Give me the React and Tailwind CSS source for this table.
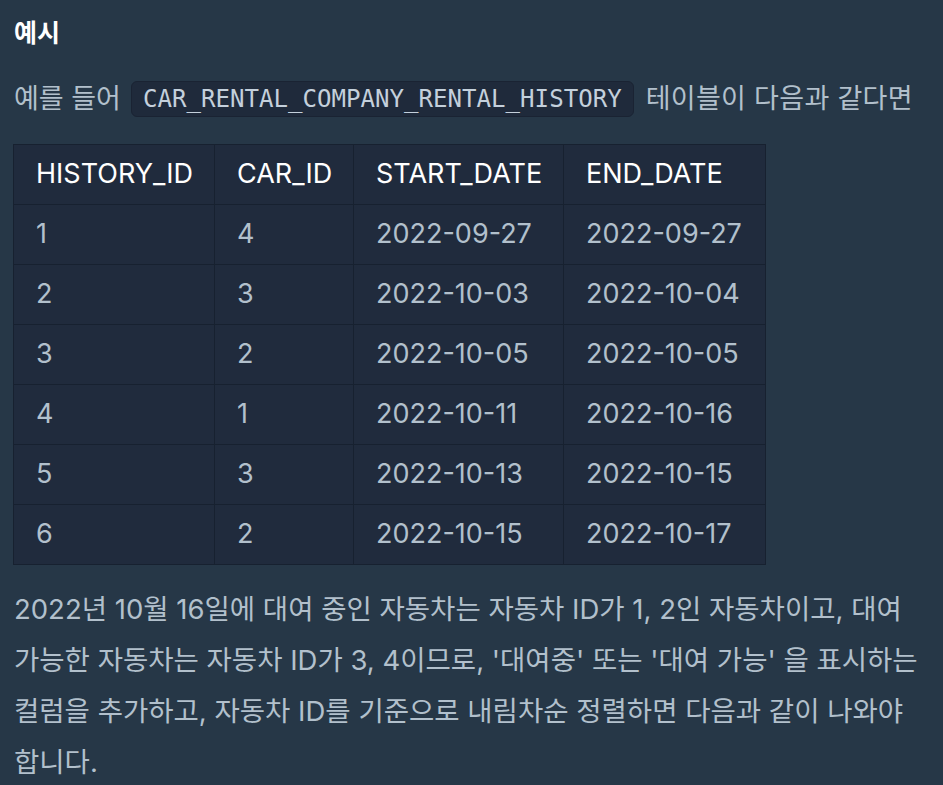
import React from "react";

const rows = [
  ["1", "4", "2022-09-27", "2022-09-27"],
  ["2", "3", "2022-10-03", "2022-10-04"],
  ["3", "2", "2022-10-05", "2022-10-05"],
  ["4", "1", "2022-10-11", "2022-10-16"],
  ["5", "3", "2022-10-13", "2022-10-15"],
  ["6", "2", "2022-10-15", "2022-10-17"],
];

const font = { fontFamily: 'Inter, "Noto Sans CJK KR", sans-serif' };

export default function App() {
  return (
    <div
      className="w-[943px] h-[785px] overflow-hidden bg-[#263747] px-[14px] text-[#b2c0cc]"
      style={font}
    >
      <div className="pt-[8px] text-[25px] leading-[50px] font-bold text-white">예시</div>
      <div className="mt-[15px] text-[27px] leading-[51px] flex items-center whitespace-nowrap">
        <span>예를 들어</span>
        <code
          className="ml-[10px] mr-[12px] inline-block rounded-[6px] border border-[#1a2333] bg-[#1f2a3b] px-[11px] h-[36px] leading-[34px] text-[24.1px] text-[#c4d0dc]"
          style={{ fontFamily: '"DejaVu Sans Mono", monospace' }}
        >
          CAR_RENTAL_COMPANY_RENTAL_HISTORY
        </code>
        <span className="tracking-[0.3px]">테이블이 다음과 같다면</span>
      </div>
      <table className="mt-[20px] ml-[-1px] w-[752px] table-fixed border-collapse bg-[#202b3d] text-[27px]">
        <colgroup>
          <col className="w-[201px]" />
          <col className="w-[139px]" />
          <col className="w-[210px]" />
          <col className="w-[202px]" />
        </colgroup>
        <thead>
          <tr className="h-[60px] text-white">
            <th className="border border-[#172130] pl-[22px] text-left font-normal whitespace-nowrap">HISTORY_ID</th>
            <th className="border border-[#172130] pl-[22px] text-left font-normal whitespace-nowrap">CAR_ID</th>
            <th className="border border-[#172130] pl-[22px] text-left font-normal whitespace-nowrap">START_DATE</th>
            <th className="border border-[#172130] pl-[22px] text-left font-normal whitespace-nowrap">END_DATE</th>
          </tr>
        </thead>
        <tbody>
          {rows.map((r, i) => (
            <tr key={i} className="h-[60px]">
              {r.map((c, j) => (
                <td key={j} className="border border-[#172130] pl-[22px] whitespace-nowrap">
                  {c}
                </td>
              ))}
            </tr>
          ))}
        </tbody>
      </table>
      <p className="mt-[19px] text-[27.5px] leading-[51px] break-keep">
        2022년 10월 16일에 대여 중인 자동차는 자동차 ID가 1, 2인 자동차이고, 대여 가능한 자동차는 자동차 ID가 3, 4이므로, '대여중' 또는 '대여 가능' 을 표시하는 컬럼을 추가하고, 자동차 ID를 기준으로 내림차순 정렬하면 다음과 같이 나와야 합니다.
      </p>
    </div>
  );
}
